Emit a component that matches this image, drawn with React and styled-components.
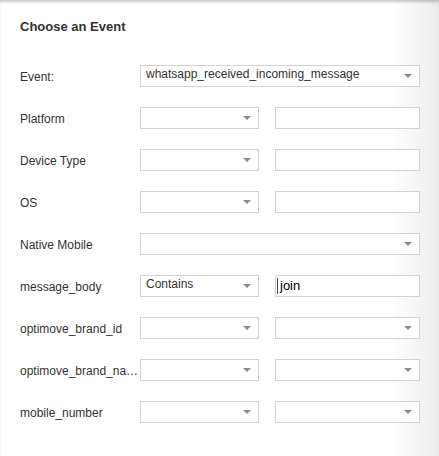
import styled, { createGlobalStyle } from "styled-components";

const GlobalStyle = createGlobalStyle`
    html, body {
        margin: 0;
        padding: 0;
        background: #ffffff;
    }
    * {
        box-sizing: border-box;
    }
`;

const Panel = styled.div`
    width: 439px;
    height: 456px;
    padding: 19px 20px 0 20px;
    font-family: "Liberation Sans", Arial, sans-serif;
    color: #333333;
    background: linear-gradient(to right, #ffffff 0, #ffffff 392px, #ececec 439px);
    box-shadow: inset 0 3px 3px -1px rgba(0, 0, 0, 0.22);
    overflow: hidden;
`;

const Title = styled.div`
    font-size: 13px;
    font-weight: bold;
    line-height: 16px;
    margin-bottom: 30px;
`;

const Rows = styled.div`
    display: flex;
    flex-direction: column;
    gap: 20px;
`;

const Row = styled.div`
    display: grid;
    grid-template-columns: 120px 119px 16px 145px;
    align-items: center;
    height: 22px;
`;

const Label = styled.div`
    font-size: 12px;
    line-height: 16px;
    padding-top: 2px;
    white-space: nowrap;
    overflow: hidden;
    text-overflow: ellipsis;
`;

const Select = styled.div`
    position: relative;
    grid-column: ${(p) => (p.$wide ? "2 / 5" : p.$second ? "4" : "2")};
    height: 22px;
    border: 1px solid #d2d2d2;
    background: #ffffff;
    padding: 0 20px 0 5px;
    font-size: 12px;
    line-height: 17px;
    color: #333333;
    white-space: nowrap;
    overflow: hidden;
    &::after {
        content: "";
        position: absolute;
        right: 7px;
        top: 8px;
        border-left: 4px solid transparent;
        border-right: 4px solid transparent;
        border-top: 4px solid #8c8c8c;
    }
`;

const Input = styled.div`
    position: relative;
    grid-column: 4;
    height: 22px;
    border: 1px solid #d2d2d2;
    background: #ffffff;
    padding: 0 4px;
    font-size: 13px;
    line-height: 19px;
    color: #000000;
    ${(p) =>
        p.$focused &&
        `
        &::before {
            content: "";
            position: absolute;
            left: 1px;
            top: 2px;
            width: 1px;
            height: 16px;
            background: #444;
        }
    `}
`;

const rows = [
    { label: "Event:", wide: true, value: "whatsapp_received_incoming_message" },
    { label: "Platform", second: "input" },
    { label: "Device Type", second: "input" },
    { label: "OS", second: "input" },
    { label: "Native Mobile", wide: true },
    { label: "message_body", value: "Contains", second: "input", secondValue: "join" },
    { label: "optimove_brand_id", second: "select" },
    { label: "optimove_brand_name", second: "select" },
    { label: "mobile_number", second: "select" },
];

export default function App() {
    return (
        <>
            <GlobalStyle />
            <Panel>
                <Title>Choose an Event</Title>
                <Rows>
                    {rows.map((row) => (
                        <Row key={row.label}>
                            <Label>{row.label}</Label>
                            <Select $wide={row.wide}>{row.value}</Select>
                            {row.second === "input" && (
                                <Input $focused={!!row.secondValue}>{row.secondValue}</Input>
                            )}
                            {row.second === "select" && <Select $second />}
                        </Row>
                    ))}
                </Rows>
            </Panel>
        </>
    );
}
